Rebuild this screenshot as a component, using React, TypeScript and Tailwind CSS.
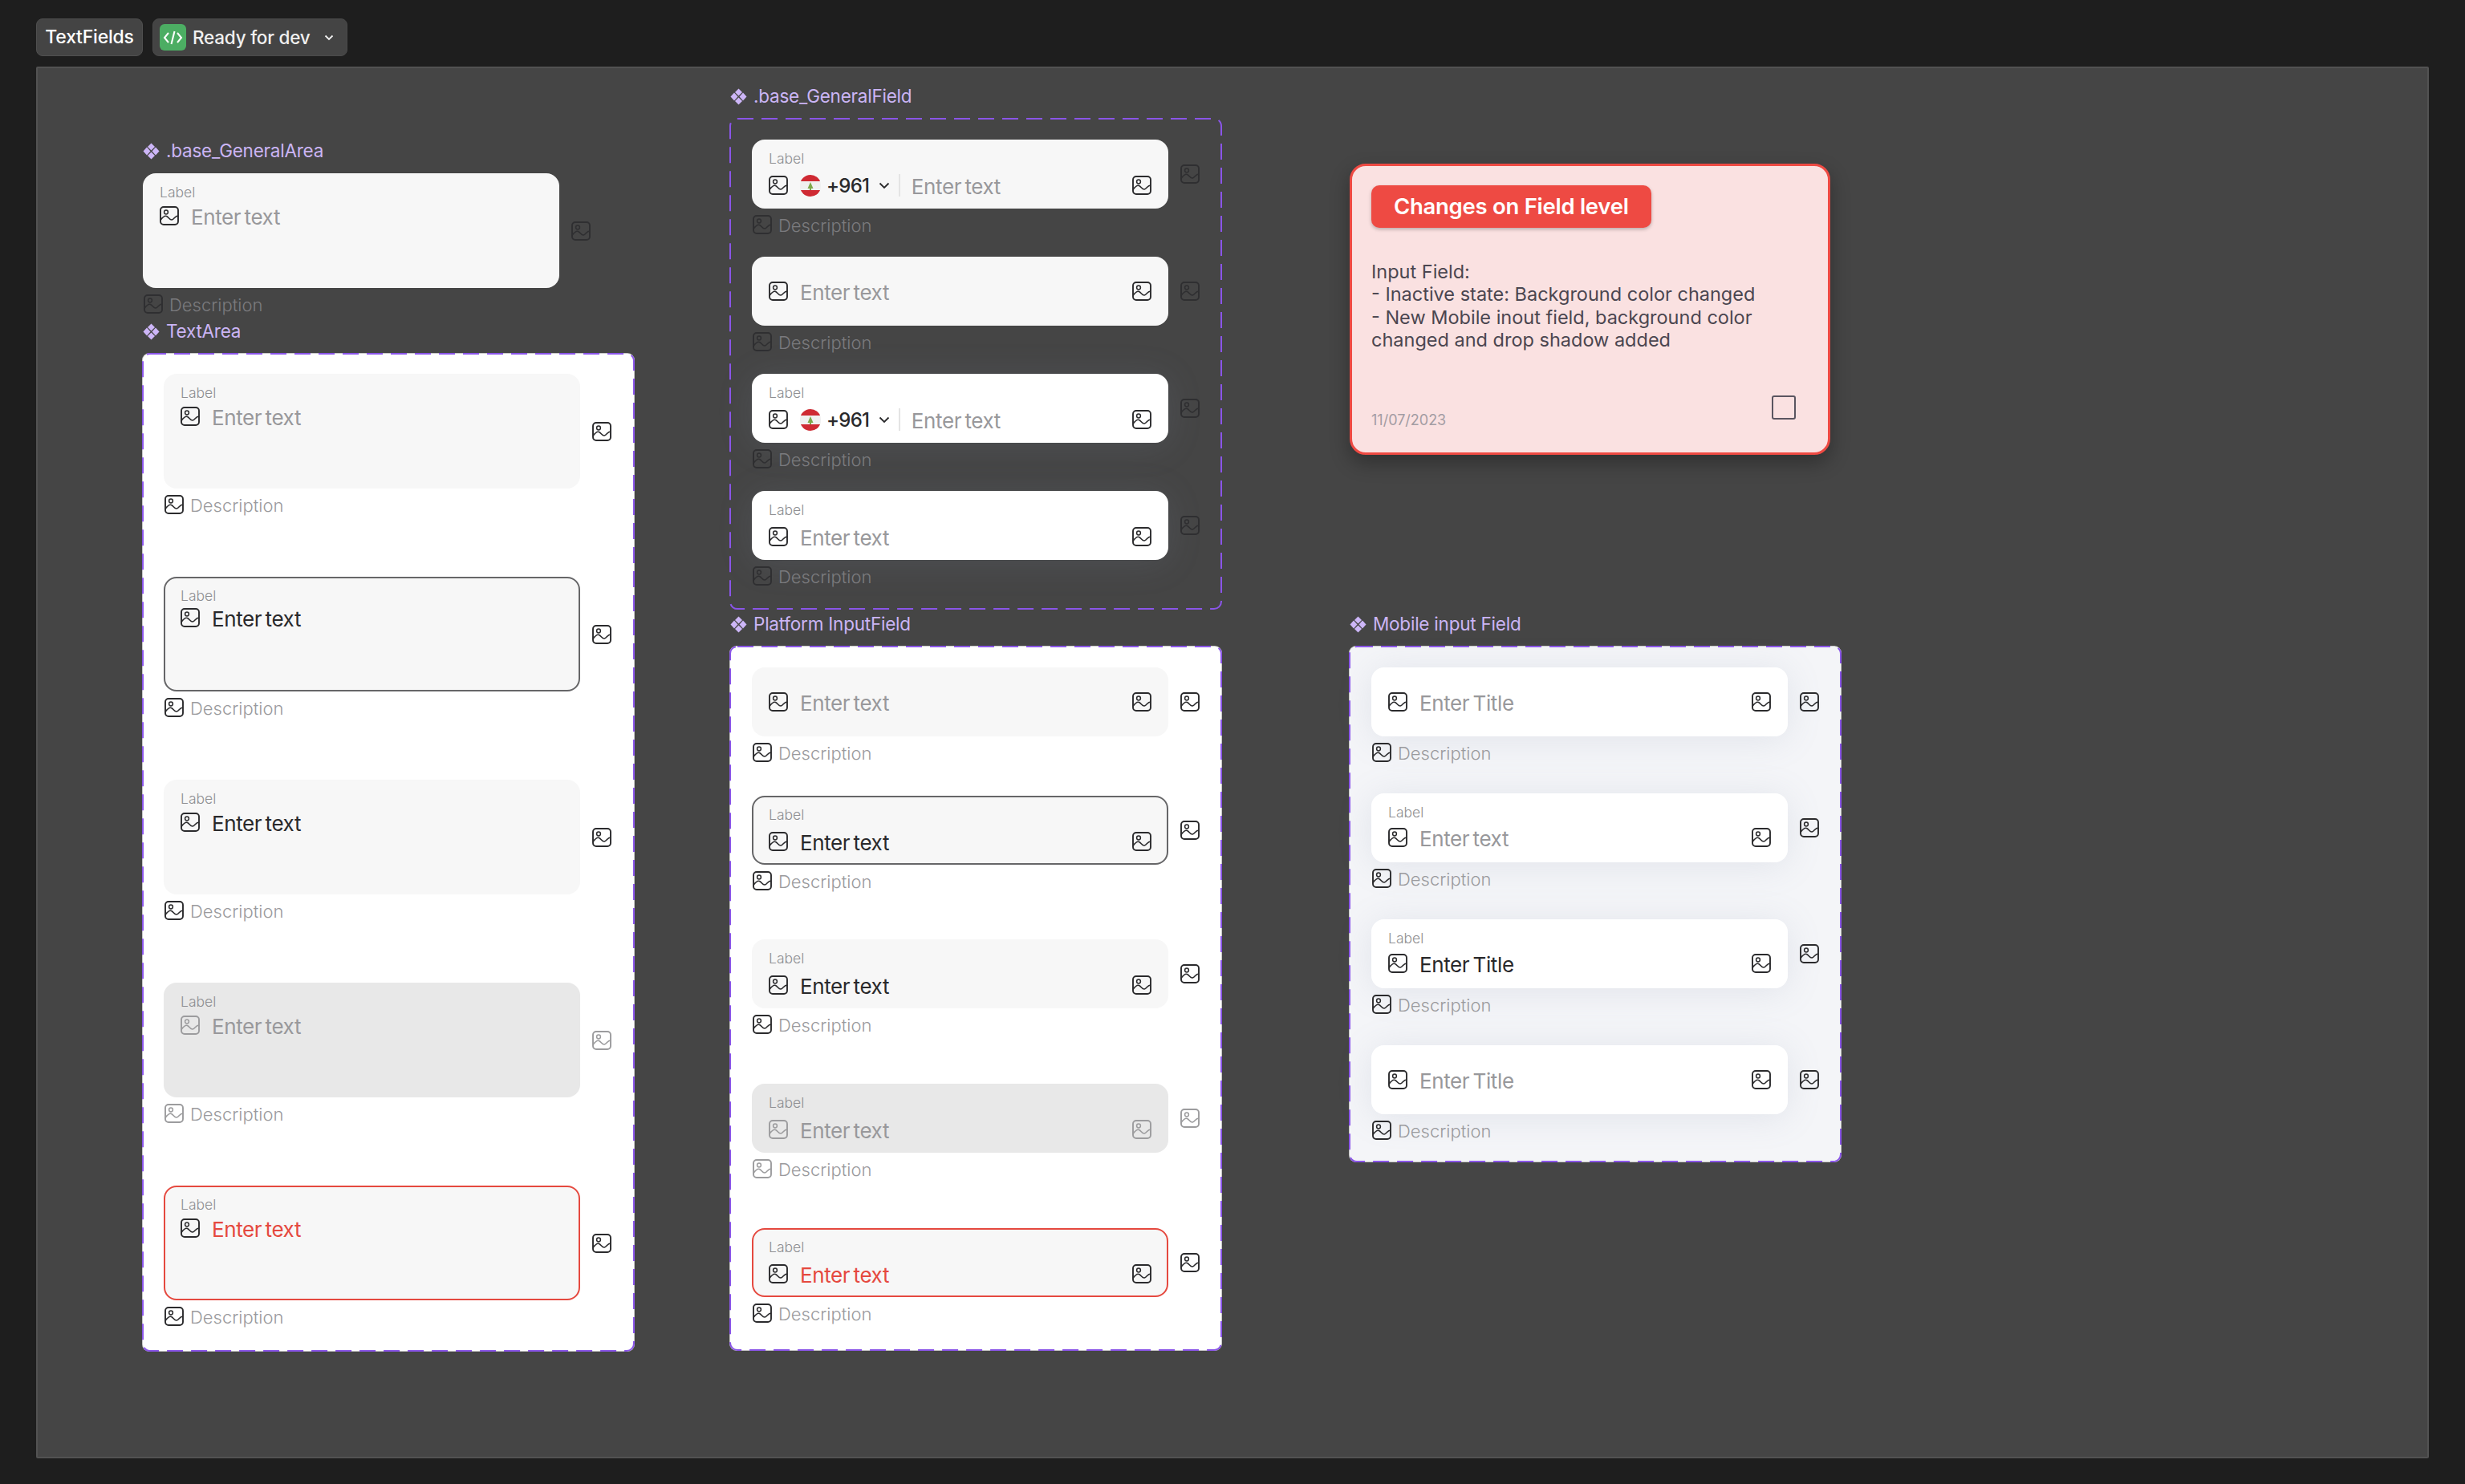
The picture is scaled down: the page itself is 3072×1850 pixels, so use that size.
import type { ReactNode } from 'react'

type Tone = 'dark' | 'muted' | 'disabled'

const toneClass: Record<Tone, string> = {
  dark: 'text-[#2b2b2d]',
  muted: 'text-[#2f2f31]',
  disabled: 'text-[#9c9c9e]',
}

function ImgIcon({ tone = 'dark' }: { tone?: Tone }) {
  return (
    <svg width="24" height="24" viewBox="0 0 24 24" fill="none" className={`shrink-0 ${toneClass[tone]}`}>
      <rect x="1" y="1" width="22" height="22" rx="4" stroke="currentColor" strokeWidth="1.9" />
      <circle cx="8" cy="7.5" r="2.4" stroke="currentColor" strokeWidth="1.5" />
      <path
        d="M1 17.5C3.5 14 6 11.5 8.5 12.5C11 13.5 12.5 17.5 15.2 17C18 16.5 19 12 23 12"
        stroke="currentColor"
        strokeWidth="1.6"
      />
    </svg>
  )
}

function Diamond() {
  return (
    <svg width="21" height="21" viewBox="0 0 21 21" className="shrink-0 text-[#cdb6f8]" fill="currentColor">
      <path d="M10.5 0.5L15 5L10.5 9.5L6 5Z" />
      <path d="M5 5.5L9.5 10.5L5 15.5L0.5 10.5Z" />
      <path d="M16 5.5L20.5 10.5L16 15.5L11.5 10.5Z" />
      <path d="M10.5 11.5L15 16L10.5 20.5L6 16Z" />
    </svg>
  )
}

function Title({ children }: { children: ReactNode }) {
  return (
    <div className="flex items-center gap-[8px] h-[28px] text-[22.5px] tracking-[-0.01em] text-[#cbb5f5] whitespace-nowrap">
      <Diamond />
      {children}
    </div>
  )
}

function Frame({ className, children }: { className: string; children: ReactNode }) {
  return (
    <div className={`relative rounded-[8px] w-[612px] flex flex-col ${className}`}>
      <svg className="absolute inset-0 w-full h-full overflow-visible pointer-events-none">
        <rect
          width="100%"
          height="100%"
          rx="9"
          fill="none"
          stroke="#8a55e8"
          strokeWidth="2"
          strokeDasharray="20 10"
        />
      </svg>
      {children}
    </div>
  )
}

function Flag() {
  return (
    <span className="w-[26px] h-[27px] rounded-full overflow-hidden shrink-0 block">
      <svg width="26" height="27" viewBox="0 0 26 27" className="block">
        <rect width="26" height="27" fill="#f0f0f0" />
        <rect width="26" height="8" fill="#cf2a33" />
        <rect y="19" width="26" height="8" fill="#cf2a33" />
        <path d="M13 9L16.5 17H14V19H12V17H9.5Z" fill="#7da84a" />
      </svg>
    </span>
  )
}

type FieldProps = {
  label?: boolean
  phone?: boolean
  area?: boolean
  trailing?: boolean
  text?: string
  state?: 'idle' | 'focus' | 'filled' | 'disabled' | 'error'
  surface?: string
  rowGap?: string
}

function Field({
  label = true,
  phone = false,
  area = false,
  trailing = true,
  text = 'Enter text',
  state = 'idle',
  surface = 'bg-[#f7f7f7]',
  rowGap = 'mt-[10px]',
}: FieldProps) {
  const textColor = {
    idle: 'text-[#98989b]',
    focus: 'text-[#29292b]',
    filled: 'text-[#29292b]',
    disabled: 'text-[#98989b]',
    error: 'text-[#e5493f]',
  }[state]
  const box = {
    idle: surface,
    focus: 'bg-[#f7f7f7] border-2 border-[#666668]',
    filled: surface,
    disabled: 'bg-[#e8e8e8]',
    error: 'bg-[#f7f7f7] border-2 border-[#e5493f]',
  }[state]
  const bordered = state === 'focus' || state === 'error'
  const iconTone: Tone = state === 'disabled' ? 'disabled' : 'dark'

  return (
    <div
      className={`w-[519px] rounded-[16px] shrink-0 flex flex-col ${area ? 'h-[143px]' : 'h-[86px]'} ${
        bordered ? 'px-[19px]' : 'px-[21px]'
      } ${label ? (bordered ? 'pt-[12px]' : 'pt-[14px]') : 'justify-center'} ${box}`}
    >
      {label && <div className="h-[20px] leading-[20px] text-[17.5px] font-light text-[#8f8f92]">Label</div>}
      <div className={`flex items-center h-[26px] shrink-0 ${label ? rowGap : ''}`}>
        <ImgIcon tone={iconTone} />
        {phone && (
          <>
            <span className="ml-[15px]">
              <Flag />
            </span>
            <span className="ml-[7px] pt-[2px] text-[24px] font-medium tracking-[-0.03em] text-[#29292b]">+961</span>
            <svg width="14" height="9" viewBox="0 0 14 9" fill="none" className="ml-[12px] text-[#29292b]">
              <path d="M1.5 1.5L7 7L12.5 1.5" stroke="currentColor" strokeWidth="1.8" />
            </svg>
            <span className="ml-[11px] w-[1.5px] h-[28px] bg-[#e4e4e4]" />
          </>
        )}
        <span
          className={`${phone ? 'ml-[14px]' : 'ml-[15px]'} pt-[3px] text-[26px] tracking-[-0.015em] [word-spacing:-0.1em] leading-[26px] ${textColor}`}
        >
          {text}
        </span>
        {trailing && (
          <span className="ml-auto">
            <ImgIcon tone={iconTone} />
          </span>
        )}
      </div>
    </div>
  )
}

type RowProps = FieldProps & {
  outerTone?: Tone
  descTone?: Tone
  descText?: string
  shadow?: string
  className?: string
}

function Row({ outerTone = 'dark', descTone = 'dark', descText = 'text-[#9a9a9d]', shadow = '', className = '', ...field }: RowProps) {
  return (
    <div className={className}>
      <div className="flex items-center gap-[15px]">
        <div className={`rounded-[16px] ${shadow}`}>
          <Field {...field} />
        </div>
        <ImgIcon tone={outerTone} />
      </div>
      <div className="flex items-center gap-[8px] mt-[8px] ml-[1px] h-[24px]">
        <ImgIcon tone={descTone} />
        <span className={`pt-[2px] text-[22px] font-light leading-[24px] ${descText}`}>Description</span>
      </div>
    </div>
  )
}

const glow = 'shadow-[0_4px_44px_rgba(130,140,170,0.16)]'
const whiteEdge = 'shadow-[0_0_0_1px_rgba(255,255,255,0.7)]'

export default function App() {
  return (
    <div className="min-h-[1850px] bg-[#1e1e1e] font-[Inter,sans-serif]">
      {/* top chips */}
      <div className="flex gap-[12px] pt-[23px] pl-[45px]">
        <div className="h-[47px] w-[133px] flex items-center justify-center rounded-[8px] bg-[#444444] border border-[#4f4f4f] text-[23px] font-medium tracking-[-0.01em] text-white">
          TextFields
        </div>
        <div className="h-[47px] w-[243px] pl-[8px] flex items-center rounded-[8px] bg-[#444444] border border-[#4a4a4a]">
          <span className="w-[33px] h-[33px] rounded-[6px] bg-[#4cad63] flex items-center justify-center">
            <svg width="25" height="20" viewBox="0 0 25 20" fill="none" stroke="#fff" strokeWidth="2">
              <path d="M7 4L2 10L7 16" />
              <path d="M14.5 2L10.5 18" />
              <path d="M18 4L23 10L18 16" />
            </svg>
          </span>
          <span className="ml-[8px] text-[22.5px] font-medium tracking-[-0.01em] text-[#f0f0f0]">Ready for dev</span>
          <svg width="12" height="8" viewBox="0 0 12 8" fill="none" className="ml-[18px]">
            <path d="M1.5 1.5L6 6L10.5 1.5" stroke="#f0f0f0" strokeWidth="1.8" />
          </svg>
        </div>
      </div>

      {/* canvas */}
      <div className="mt-[13px] ml-[45px] w-[2982px] h-[1735px] bg-[#454545] border-2 border-[#525252] rounded-[2px] pl-[131px] flex items-start">
        <div className="w-[612px] pt-[89px] shrink-0">
          <Title>.base_GeneralArea</Title>
          <div className="mt-[14px]">
            <Row area trailing={false} rowGap="mt-[6px]" outerTone="muted" descTone="muted" descText="text-[#7b7b7e]" />
          </div>
          <div className="mt-[8px]">
            <Title>TextArea</Title>
          </div>
          <div className="mt-[14px]">
            <Frame className={`bg-white pt-[25px] pb-[31px] pl-[26px] gap-[78px] ${whiteEdge}`}>
              <Row area trailing={false} rowGap="mt-[6px]" />
              <Row area trailing={false} rowGap="mt-[4px]" state="focus" />
              <Row area trailing={false} rowGap="mt-[6px]" state="filled" />
              <Row
                area
                trailing={false}
                rowGap="mt-[6px]"
                state="disabled"
                outerTone="disabled"
                descTone="disabled"
              />
              <Row area trailing={false} rowGap="mt-[6px]" state="error" />
            </Frame>
          </div>
        </div>

        <div className="w-[612px] ml-[120px] pt-[21px] shrink-0">
          <Title>.base_GeneralField</Title>
          <div className="mt-[14px]">
            <Frame className="pt-[26px] pb-[29px] pl-[27px] gap-[28px]">
              <Row phone outerTone="muted" descTone="muted" descText="text-[#7b7b7e]" />
              <Row label={false} outerTone="muted" descTone="muted" descText="text-[#7b7b7e]" />
              <Row phone surface="bg-white" shadow={glow} outerTone="muted" descTone="muted" descText="text-[#7b7b7e]" />
              <Row surface="bg-white" shadow={glow} outerTone="muted" descTone="muted" descText="text-[#7b7b7e]" />
            </Frame>
          </div>
          <div className="mt-[5px]">
            <Title>Platform InputField</Title>
          </div>
          <div className="mt-[14px]">
            <Frame className={`bg-white pt-[26px] pb-[34px] pl-[27px] ${whiteEdge}`}>
              <Row label={false} />
              <Row className="mt-[42px]" state="focus" />
              <Row className="mt-[61px]" state="filled" />
              <Row className="mt-[62px]" state="disabled" outerTone="disabled" descTone="disabled" />
              <Row className="mt-[62px]" state="error" />
            </Frame>
          </div>
        </div>

        <div className="w-[612px] ml-[160px] pt-[119px] shrink-0">
          {/* change note */}
          <div className="w-[599px] h-[363px] box-border rounded-[20px] border-[3px] border-[#ee4a43] bg-[#fae1e1] shadow-[0_10px_24px_rgba(0,0,0,0.3)] pl-[24px] pr-[24px] pt-[24px] pb-[24px] flex flex-col">
            <div className="w-[349px] h-[53px] rounded-[10px] bg-[#ee4a43] shadow-[0_2px_4px_rgba(0,0,0,0.25)] flex items-center pl-[28px] text-[27.5px] font-semibold tracking-[-0.01em] text-white whitespace-nowrap">
              Changes on Field level
            </div>
            <p className="mt-[41px] text-[23.5px] leading-[28.3px] text-[#4b4650]">
              Input Field:
              <br />- Inactive state: Background color changed
              <br />- New Mobile inout field, background color
              <br />
              changed and drop shadow added
            </p>
            <div className="mt-auto flex items-end justify-between pr-[16px]">
              <span className="text-[18px] leading-[22px] mb-[5px] text-[#a39ca3]">11/07/2023</span>
              <span className="w-[30px] h-[30px] rounded-[3px] border-2 border-[#5a5560] mb-[17px]" />
            </div>
          </div>

          <div className="mt-[197px]">
            <Title>Mobile input Field</Title>
          </div>
          <div className="mt-[14px]">
            <Frame className={`bg-[#f4f5f8] pt-[26px] pb-[27px] pl-[27px] gap-[39px] ${whiteEdge}`}>
              <Row label={false} text="Enter Title" surface="bg-white" shadow={glow} />
              <Row rowGap="mt-[8px]" surface="bg-white" shadow={glow} />
              <Row rowGap="mt-[8px]" text="Enter Title" state="filled" surface="bg-white" shadow={glow} />
              <Row label={false} text="Enter Title" surface="bg-white" shadow={glow} />
            </Frame>
          </div>
        </div>
      </div>
    </div>
  )
}
